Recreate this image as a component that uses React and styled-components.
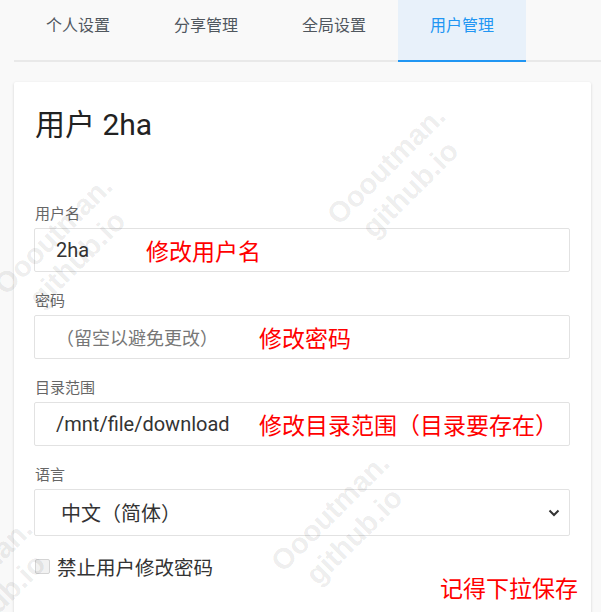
import styled, { createGlobalStyle } from "styled-components";

const GlobalStyle = createGlobalStyle`
  html, body {
    margin: 0;
    padding: 0;
    background: #f9f9f9;
  }
  body {
    font-family: Roboto, "Noto Sans CJK SC", sans-serif;
    color: #333;
    overflow: hidden;
  }
`;

const Page = styled.div`
  position: relative;
  height: 612px;
  padding-left: 14px;
  overflow: hidden;
`;

const TabBar = styled.nav`
  display: flex;
  height: 60px;
  border-bottom: 2px solid #e9e9e9;
`;

const Tab = styled.div`
  width: 128px;
  height: 45px;
  margin-bottom: -2px;
  padding-top: 15px;
  display: flex;
  justify-content: center;
  font-size: 16px;
  line-height: 22px;
  color: ${(p) => (p.$active ? "#2196f3" : "#50575e")};
  background: ${(p) => (p.$active ? "#e8f1fa" : "transparent")};
  border-bottom: 2px solid ${(p) => (p.$active ? "#2196f3" : "transparent")};
`;

const Card = styled.section`
  margin: 20px 10px 0 0;
  padding: 26px 21px 40px 20px;
  background: #fff;
  border-radius: 2px;
  box-shadow: 0 1px 3px rgba(0, 0, 0, 0.16);
`;

const Title = styled.h2`
  margin: 0 0 62px 1px;
  font-size: 30px;
  font-weight: 400;
  line-height: 34px;
  color: #222;
`;

const Form = styled.div`
  display: flex;
  flex-direction: column;
  gap: 19px;
`;

const Field = styled.div`
  display: flex;
  flex-direction: column;
`;

const Label = styled.label`
  margin: 0 0 4px 1px;
  font-size: 15px;
  line-height: 20px;
  color: #666;
`;

const Box = styled.div`
  height: ${(p) => p.$h || 44}px;
  box-sizing: border-box;
  display: flex;
  align-items: center;
  padding: 0 5px 0 ${(p) => p.$pl || 21}px;
  border: 1px solid #e2e2e2;
  border-radius: 2px;
  font-size: 20px;
  color: #333;
  white-space: nowrap;
`;

const Value = styled.span`
  width: ${(p) => p.$w}px;
  flex: none;
  color: ${(p) => (p.$placeholder ? "#777" : "#333")};
  font-size: ${(p) => (p.$placeholder ? 18 : 20)}px;
`;

const Note = styled.span`
  color: #ff0000;
  font-family: "Noto Sans CJK SC", sans-serif;
  font-size: 23px;
  white-space: nowrap;
`;

const SelectText = styled.span`
  flex: 1;
`;

const Chevron = styled.svg`
  width: 12px;
  height: 8px;
  margin-right: 4px;
`;

const CheckRow = styled.div`
  display: flex;
  align-items: center;
  margin-top: 18px;
  height: 24px;
`;

const Check = styled.span`
  width: 13px;
  height: 13px;
  border: 1px solid #d4d4d4;
  background: #f2f2f2;
  border-radius: 2px;
  margin: 0 7px 0 1px;
`;

const CheckLabel = styled.span`
  font-size: 19.5px;
  color: #333;
`;

const SaveRow = styled.div`
  display: flex;
  justify-content: flex-end;
  margin: -8px -8px 0 0;
`;

const Watermark = styled.div`
  position: absolute;
  left: ${(p) => p.$x}px;
  top: ${(p) => p.$y}px;
  transform: translate(-50%, -50%) rotate(-45deg);
  display: flex;
  flex-direction: column;
  align-items: center;
  font-family: "Liberation Sans", Arial, sans-serif;
  font-weight: 700;
  font-size: 29px;
  line-height: 34px;
  color: rgba(0, 0, 0, 0.085);
  pointer-events: none;
  white-space: nowrap;
`;

const tabs = ["个人设置", "分享管理", "全局设置", "用户管理"];

const marks = [
  { x: 398, y: 177 },
  { x: 65, y: 247 },
  { x: 342, y: 524 },
  { x: -15, y: 590 },
];

export default function App() {
  return (
    <>
      <GlobalStyle />
      <Page>
        <TabBar>
          {tabs.map((t, i) => (
            <Tab key={t} $active={i === 3}>
              {t}
            </Tab>
          ))}
        </TabBar>
        <Card>
          <Title>用户 2ha</Title>
          <Form>
            <Field>
              <Label>用户名</Label>
              <Box>
                <Value $w={90}>2ha</Value>
                <Note>修改用户名</Note>
              </Box>
            </Field>
            <Field>
              <Label>密码</Label>
              <Box>
                <Value $w={203} $placeholder>
                  （留空以避免更改）
                </Value>
                <Note>修改密码</Note>
              </Box>
            </Field>
            <Field>
              <Label>目录范围</Label>
              <Box>
                <Value $w={203}>/mnt/file/download</Value>
                <Note>修改目录范围（目录要存在）</Note>
              </Box>
            </Field>
            <Field>
              <Label>语言</Label>
              <Box $h={47} $pl={26}>
                <SelectText>中文（简体）</SelectText>
                <Chevron viewBox="0 0 12 8">
                  <path d="M1.5 1.5 L6 6 L10.5 1.5" fill="none" stroke="#333" strokeWidth="2" />
                </Chevron>
              </Box>
            </Field>
          </Form>
          <CheckRow>
            <Check />
            <CheckLabel>禁止用户修改密码</CheckLabel>
          </CheckRow>
          <SaveRow>
            <Note>记得下拉保存</Note>
          </SaveRow>
        </Card>
        {marks.map((m, i) => (
          <Watermark key={i} $x={m.x} $y={m.y}>
            <span>Oooutman.</span>
            <span>github.io</span>
          </Watermark>
        ))}
      </Page>
    </>
  );
}
